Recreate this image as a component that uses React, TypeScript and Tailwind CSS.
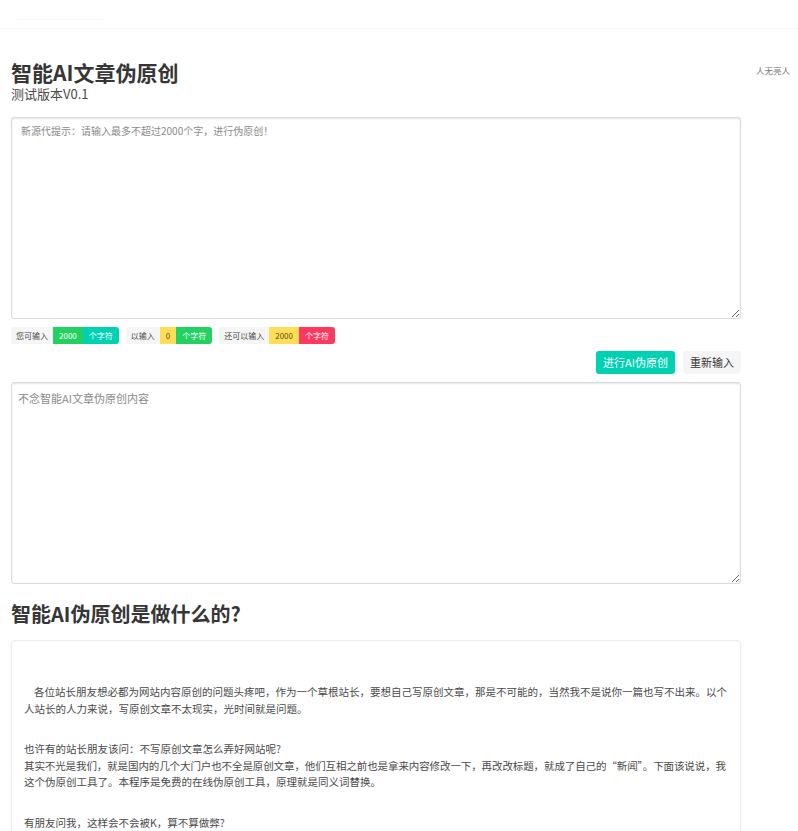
import React from "react"

const cjk = { fontFamily: '"Noto Sans CJK SC", "Noto Sans", sans-serif' }

// 字数统计标签组
const tagGroups = [
  {
    label: "您可输入",
    tags: [
      { text: "2000", cls: "bg-[#23d160] text-white" },
      { text: "个字符", cls: "bg-[#00d1b2] text-white" },
    ],
  },
  {
    label: "以输入",
    tags: [
      { text: "0", cls: "bg-[#ffdd57] text-black/70" },
      { text: "个字符", cls: "bg-[#23d160] text-white" },
    ],
  },
  {
    label: "还可以输入",
    tags: [
      { text: "2000", cls: "bg-[#ffdd57] text-black/70" },
      { text: "个字符", cls: "bg-[#ff3860] text-white" },
    ],
  },
]

export default function App() {
  return (
    <div className="min-h-screen bg-white text-[#4a4a4a]" style={cjk}>
      {/* Top bar */}
      <nav className="h-[29px] border-b border-[#f3f3f3] flex items-end pb-[8px] pl-[17px]">
        <div className="h-px w-[86px] bg-[#f4f4f4]" />
      </nav>

      <div className="flex">
        <main className="ml-[11px] w-[730px]">
          <h1 className="mt-[31px] text-[21px] leading-[24px] font-bold text-[#363636]">智能AI文章伪原创</h1>
          <p className="mt-[2px] text-[13px] leading-[16px] text-[#4a4a4a]">测试版本V0.1</p>

          <textarea
            className="mt-[15px] block w-full h-[202px] rounded-[3px] border border-[#dbdbdb] shadow-[inset_0_1px_2px_rgba(10,10,10,0.1)] px-[9px] py-[6px] text-[10px] leading-[14px] outline-none placeholder:text-[#8a8a8a]"
            placeholder="新源代提示：请输入最多不超过2000个字，进行伪原创！"
          />

          <div className="mt-[8px] flex items-center gap-[7px]">
            {tagGroups.map((g) => (
              <div key={g.label} className="flex items-center">
                <span className="h-[17px] flex items-center px-[5px] bg-[#f5f5f5] rounded-l-[3px] text-[8px] text-[#4a4a4a]">
                  {g.label}
                </span>
                {g.tags.map((t, i) => (
                  <span
                    key={i}
                    className={`h-[17px] flex items-center px-[6px] text-[8px] ${t.cls} ${
                      i === g.tags.length - 1 ? "rounded-r-[3px]" : ""
                    }`}
                  >
                    {t.text}
                  </span>
                ))}
              </div>
            ))}
          </div>

          <div className="mt-[7px] flex justify-end gap-[8px]">
            <button className="h-[23px] w-[79px] rounded-[3px] bg-[#00d1b2] text-white text-[11px]">进行AI伪原创</button>
            <button className="h-[23px] w-[58px] rounded-[3px] bg-[#f5f5f5] text-[#363636] text-[11px]">重新输入</button>
          </div>

          <textarea
            className="mt-[8px] block w-full h-[202px] rounded-[3px] border border-[#dbdbdb] shadow-[inset_0_1px_2px_rgba(10,10,10,0.1)] px-[6px] py-[8px] text-[11px] leading-[15px] outline-none placeholder:text-[#8a8a8a]"
            placeholder="不念智能AI文章伪原创内容"
          />

          <h2 className="mt-[16px] text-[20px] leading-[28px] font-bold text-[#363636]">智能AI伪原创是做什么的?</h2>

          <div className="mt-[12px] rounded-[4px] border border-[#ececec] shadow-[0_1px_3px_rgba(10,10,10,0.06)] px-[12px] pt-[43px] pb-[20px] text-[10.5px] leading-[16.5px] text-[#4a4a4a]">
            <p className="whitespace-nowrap indent-[10px]">
              各位站长朋友想必都为网站内容原创的问题头疼吧，作为一个草根站长，要想自己写原创文章，那是不可能的，当然我不是说你一篇也写不出来。以个
              <br />
              人站长的人力来说，写原创文章不太现实，光时间就是问题。
            </p>
            <p className="mt-[24px] whitespace-nowrap">
              也许有的站长朋友该问：不写原创文章怎么弄好网站呢?
              <br />
              <span className="tracking-[-0.1px]">
                其实不光是我们，就是国内的几个大门户也不全是原创文章，他们互相之前也是拿来内容修改一下，再改改标题，就成了自己的“新闻”。下面该说说，我
              </span>
              <br />
              这个伪原创工具了。本程序是免费的在线伪原创工具，原理就是同义词替换。
            </p>
            <p className="mt-[24px] whitespace-nowrap">有朋友问我，这样会不会被K，算不算做弊?</p>
          </div>
        </main>

        <aside className="ml-[15px] pt-[26px]">
          <span className="text-[8.5px] text-[#777]">人无亮人</span>
        </aside>
      </div>
    </div>
  )
}
